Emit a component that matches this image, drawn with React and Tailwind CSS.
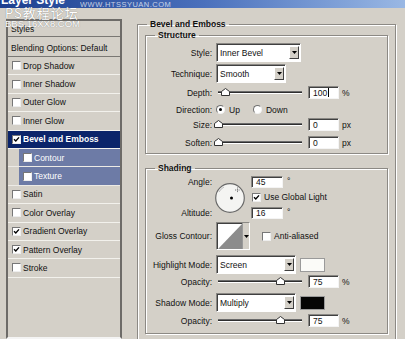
import React from "react";

const styleRows = [
  { label: "Drop Shadow" },
  { label: "Inner Shadow" },
  { label: "Outer Glow" },
  { label: "Inner Glow" },
  { label: "Bevel and Emboss", checked: true, active: true },
  { label: "Contour", sub: true },
  { label: "Texture", sub: true },
  { label: "Satin" },
  { label: "Color Overlay" },
  { label: "Gradient Overlay", checked: true },
  { label: "Pattern Overlay", checked: true },
  { label: "Stroke" },
];

function Check({ checked, className = "" }) {
  return (
    <span
      className={`relative block h-[9px] w-[9px] shrink-0 border border-[#777] border-b-[#eee] border-r-[#eee] bg-white ${className}`}
    >
      {checked && (
        <svg className="absolute left-0 top-0" width="7" height="7" viewBox="0 0 7 7">
          <path d="M1 3.2 L2.8 5 L6 1.4" fill="none" stroke="#000" strokeWidth="1.4" />
        </svg>
      )}
    </span>
  );
}

function Radio({ checked }) {
  return (
    <span className="flex h-[9px] w-[9px] shrink-0 items-center justify-center rounded-full border border-[#6f6f6f] border-b-[#f2f2f2] border-r-[#f2f2f2] bg-white">
      {checked && <span className="block h-[3px] w-[3px] rounded-full bg-black" />}
    </span>
  );
}

function Arrow() {
  return (
    <svg width="5" height="3" viewBox="0 0 5 3">
      <path d="M0 0H5L2.5 3z" fill="#000" />
    </svg>
  );
}

function Select({ value, className = "" }) {
  return (
    <div
      className={`flex h-full border border-[#8a8884] border-b-white border-r-white bg-white shadow-[inset_1px_1px_0_#404040] ${className}`}
    >
      <span className="flex flex-1 items-center pl-[3px] pt-[1px]">{value}</span>
      <span className="my-[2px] mr-[1px] flex w-[10px] items-center justify-center border border-white border-b-[#404040] border-r-[#404040] bg-[#d4d0c8]">
        <Arrow />
      </span>
    </div>
  );
}

function Field({ value, cursor, className = "w-[31px]" }) {
  return (
    <div
      className={`flex h-full items-center border border-[#8a8884] border-b-[#f4f4f4] border-r-[#f4f4f4] bg-white pl-[4px] shadow-[inset_1px_1px_0_#404040] ${className}`}
    >
      {value}
      {cursor && <span className="ml-[1px] block h-[9px] w-px bg-black" />}
    </div>
  );
}

function Slider({ thumb }) {
  return (
    <div className="relative h-full w-[88px] shrink-0">
      <div className="absolute left-[2px] right-[2px] top-[5px] h-[3px] border-t border-[#6a6a6a] border-b border-b-white bg-[#2e2e2e]" />
      <svg className={`absolute top-[2px] ${thumb}`} width="9" height="8" viewBox="0 0 9 8">
        <path d="M0.5 3.5 L4.5 0.5 L8.5 3.5 V7.5 H0.5 Z" fill="#fff" stroke="#333" />
      </svg>
    </div>
  );
}

function Row({ label, className = "", children }) {
  return (
    <div className={`flex items-center ${className}`}>
      <span className="w-[66px] shrink-0 text-right">{label}</span>
      <div className="ml-[4px] flex h-full items-center">{children}</div>
    </div>
  );
}

function SliderRow({ label, thumb, value, unit, cursor, className }) {
  return (
    <Row label={label} className={`h-[13px] ${className}`}>
      <Slider thumb={thumb} />
      <Field value={value} cursor={cursor} className="ml-[4px] w-[31px]" />
      <span className="ml-[3px]">{unit}</span>
    </Row>
  );
}

function Group({ title, className = "", legendClass = "ml-[9px]", children }) {
  return (
    <fieldset
      className={`border border-[#8c8984] shadow-[1px_1px_0_#fff,inset_1px_1px_0_#fff] ${className}`}
    >
      <legend className={`px-[3px] font-bold leading-[10px] ${legendClass}`}>{title}</legend>
      {children}
    </fieldset>
  );
}

function StylesList() {
  return (
    <div className="ml-[6px] mt-[11px] h-[320px] w-[116px] shrink-0 border-2 border-[#6d6b68] border-b-[#f4f4f4]">
      <div className="flex h-[16px] items-center border-b border-[#7a7874] pl-[3px]">Styles</div>
      <div className="flex h-[20px] items-center border-b border-[#7a7874] pl-[3px] pt-[2px]">
        Blending Options: Default
      </div>
      {styleRows.map((r) =>
        r.sub ? (
          <div key={r.label} className="flex h-[18.4px] border-b border-[#eceae5] pl-[11px]">
            <div className="flex flex-1 items-center bg-[#6d7ba6] pl-[4px] text-white">
              <Check />
              <span className="ml-[2px]">{r.label}</span>
            </div>
          </div>
        ) : (
          <div
            key={r.label}
            className={`flex h-[18.4px] items-center border-b border-[#f2f1ec] pl-[4px] ${
              r.active ? "bg-[#0a246a] font-bold text-white" : ""
            }`}
          >
            <Check checked={r.checked} />
            <span className="ml-[2px]">{r.label}</span>
          </div>
        )
      )}
    </div>
  );
}

function AngleDial() {
  return (
    <svg width="30" height="30" viewBox="0 0 30 30">
      <circle cx="15" cy="15" r="14.3" fill="#f4f4f2" stroke="#6a6a6a" strokeWidth="1.2" />
      <path d="M4 9 A12 12 0 0 1 9 4" fill="none" stroke="#bdbdbd" strokeWidth="1" />
      <circle cx="16.5" cy="15" r="1.5" fill="#000" />
      <path d="M22.5 4.5 V9.5 M20 7 H25" stroke="#555" strokeWidth="0.8" strokeDasharray="1 0.8" />
    </svg>
  );
}

function ContourPicker() {
  return (
    <div className="flex h-[28px] w-[34px] border border-[#8a8884] border-b-white border-r-white bg-white shadow-[inset_1px_1px_0_#404040]">
      <svg className="ml-[1px] mt-[1px]" width="24" height="25" viewBox="0 0 24 25">
        <path d="M0 25 L24 0 V25 Z" fill="#8c8c8c" />
      </svg>
      <span className="flex flex-1 items-center justify-center border-l border-[#9a9a9a] bg-[#d4d0c8]">
        <Arrow />
      </span>
    </div>
  );
}

export default function App() {
  return (
    <div className="relative h-[339px] w-[405px] overflow-hidden bg-[#d4d0c8] font-['Liberation_Sans',Arial,sans-serif] text-[8.5px] leading-[10px] text-[#111]">
      <div className="h-[8px] overflow-hidden bg-linear-to-r from-[#1d3f8f] via-[#4a70bc] to-[#9ab8e4]">
        <div className="-mt-[6px] pl-[1px] text-[12px] font-bold leading-[13px] text-white">Layer Style</div>
      </div>

      <div className="flex">
        <StylesList />

        <Group
          title="Bevel and Emboss"
          legendClass="ml-[2px]"
          className="ml-[15px] mt-[11px] h-[330px] w-[259px] px-[7px]"
        >
          <Group title="Structure" className="mt-[1px] h-[124px] w-[243px]">
            <Row label="Style:" className="mt-[3px] h-[19px]">
              <Select value="Inner Bevel" className="w-[85px]" />
            </Row>
            <Row label="Technique:" className="mt-[2px] h-[19px]">
              <Select value="Smooth" className="w-[70px]" />
            </Row>
            <SliderRow label="Depth:" thumb="left-[5px]" value="100" cursor unit="%" className="mt-[3px]" />
            <Row label="Direction:" className="mt-[4px] h-[13px]">
              <Radio checked />
              <span className="ml-[4px]">Up</span>
              <span className="ml-[13px]">
                <Radio />
              </span>
              <span className="ml-[4px]">Down</span>
            </Row>
            <SliderRow label="Size:" thumb="left-[-2px]" value="0" unit="px" className="mt-[2px]" />
            <SliderRow label="Soften:" thumb="left-[-2px]" value="0" unit="px" className="mt-[5px]" />
          </Group>

          <Group title="Shading" className="mt-[9px] h-[171px] w-[243px]">
            <div className="mt-[3px] flex h-[43px]">
              <div className="flex w-[66px] shrink-0 flex-col justify-between text-right">
                <span className="flex h-[12px] items-center justify-end">Angle:</span>
                <span className="flex h-[12px] items-center justify-end">Altitude:</span>
              </div>
              <div className="ml-[3px] mt-[7px] h-[30px] w-[30px]">
                <AngleDial />
              </div>
              <div className="ml-[6px] flex flex-col">
                <div className="flex h-[12px] items-center">
                  <Field value="45" className="w-[32px]" />
                  <span className="ml-[4px] -mt-[3px]">°</span>
                </div>
                <div className="mt-[4px] flex h-[10px] items-center">
                  <Check checked className="ml-[1px]" />
                  <span className="ml-[3px]">Use Global Light</span>
                </div>
                <div className="mt-[5px] flex h-[12px] items-center">
                  <Field value="16" className="w-[32px]" />
                  <span className="ml-[4px] -mt-[3px]">°</span>
                </div>
              </div>
            </div>
            <Row label="Gloss Contour:" className="mt-[3px] h-[28px]">
              <ContourPicker />
              <Check className="ml-[12px]" />
              <span className="ml-[3px]">Anti-aliased</span>
            </Row>
            <Row label="Highlight Mode:" className="mt-[5px] h-[19px]">
              <Select value="Screen" className="w-[80px]" />
              <span className="ml-[4px] block h-[14px] w-[25px] border border-[#9a9a9a] bg-[#fbfbf8]" />
            </Row>
            <SliderRow label="Opacity:" thumb="left-[60px]" value="75" unit="%" className="mt-[1px]" />
            <Row label="Shadow Mode:" className="mt-[5px] h-[19px]">
              <Select value="Multiply" className="w-[80px]" />
              <span className="ml-[4px] block h-[14px] w-[25px] border border-[#9a9a9a] bg-[#050505]" />
            </Row>
            <SliderRow label="Opacity:" thumb="left-[60px]" value="75" unit="%" className="mt-[2px]" />
          </Group>
        </Group>
      </div>

      <div className="pointer-events-none absolute left-0 top-0 text-white">
        <div className="absolute left-[80px] top-[1px] whitespace-nowrap text-[7.5px] leading-[8px] tracking-[0.5px] opacity-70">
          WWW.HTSSYUAN.COM
        </div>
        <div className="absolute left-[5px] top-[6px] whitespace-nowrap font-['Noto_Sans_CJK_SC',sans-serif] text-[13px] leading-[14px] tracking-[1px] [text-shadow:0_0_1px_#666]">
          PS教程论坛
        </div>
        <div className="absolute left-[5px] top-[19px] whitespace-nowrap text-[9.5px] leading-[10px] [text-shadow:0_0_1px_#777]">
          BBS.16XX8.COM
        </div>
      </div>
    </div>
  );
}
